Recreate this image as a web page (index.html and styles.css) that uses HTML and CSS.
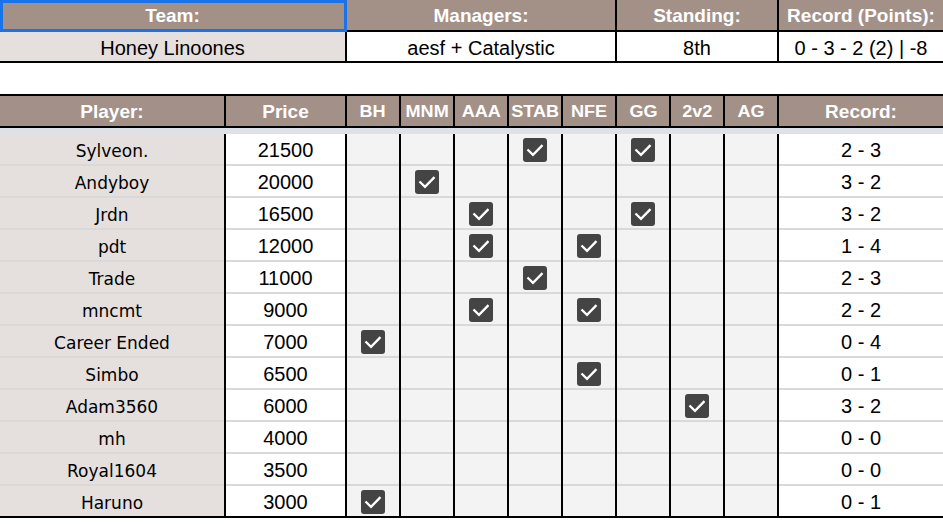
FILE: index.html
```html
<!DOCTYPE html>
<html lang="en">
<head>
<meta charset="utf-8">
<title>Honey Linoones</title>
<link rel="stylesheet" href="styles.css">
</head>
<body>
<div class="sheet">
  <div class="summary">
    <div class="row head">
      <div class="cell sel">Team:</div>
      <div class="cell">Managers:</div>
      <div class="cell">Standing:</div>
      <div class="cell clip">Record (Points):</div>
    </div>
    <div class="row data">
      <div class="cell tan">Honey Linoones</div>
      <div class="cell">aesf + Catalystic</div>
      <div class="cell">8th</div>
      <div class="cell">0 - 3 - 2 (2) | -8</div>
    </div>
  </div>

  <div class="roster">
    <div class="row head">
      <div class="cell">Player:</div>
      <div class="cell">Price</div>
      <div class="cell small"><span>BH</span></div>
      <div class="cell small"><span>MNM</span></div>
      <div class="cell small"><span>AAA</span></div>
      <div class="cell small"><span>STAB</span></div>
      <div class="cell small"><span>NFE</span></div>
      <div class="cell small"><span>GG</span></div>
      <div class="cell small"><span>2v2</span></div>
      <div class="cell small"><span>AG</span></div>
      <div class="cell">Record:</div>
    </div>
    <div class="band"></div>
    <div id="rows"></div>
  </div>
</div>
<script src="app.js"></script>
</body>
</html>
```

FILE: app.js
```js
const players = [
  ["Sylveon.", "21500", ["STAB", "GG"], "2 - 3"],
  ["Andyboy", "20000", ["MNM"], "3 - 2"],
  ["Jrdn", "16500", ["AAA", "GG"], "3 - 2"],
  ["pdt", "12000", ["AAA", "NFE"], "1 - 4"],
  ["Trade", "11000", ["STAB"], "2 - 3"],
  ["mncmt", "9000", ["AAA", "NFE"], "2 - 2"],
  ["Career Ended", "7000", ["BH"], "0 - 4"],
  ["Simbo", "6500", ["NFE"], "0 - 1"],
  ["Adam3560", "6000", ["2v2"], "3 - 2"],
  ["mh", "4000", [], "0 - 0"],
  ["Royal1604", "3500", [], "0 - 0"],
  ["Haruno", "3000", ["BH"], "0 - 1"]
];
const tiers = ["BH", "MNM", "AAA", "STAB", "NFE", "GG", "2v2", "AG"];
const check = '<span class="cb"><svg viewBox="0 0 24 24" width="24" height="24"><polyline points="5.3,12.3 10,16.8 18.7,8" fill="none" stroke="#fff" stroke-width="2.3" stroke-linecap="square"/></svg></span>';
const host = document.getElementById("rows");
players.forEach((p, i) => {
  const row = document.createElement("div");
  row.className = "row body" + (i === players.length - 1 ? " last" : "");
  let html = '<div class="cell tan name">' + p[0] + '</div>';
  html += '<div class="cell">' + p[1] + '</div>';
  tiers.forEach(t => {
    html += '<div class="cell box">' + (p[2].includes(t) ? check : '') + '</div>';
  });
  html += '<div class="cell">' + p[3] + '</div>';
  row.innerHTML = html;
  host.appendChild(row);
});
```

FILE: styles.css
```css
html, body {
  margin: 0;
  padding: 0;
  background: #fff;
  overflow: hidden;
}

.sheet {
  width: 943px;
  font-family: "Liberation Sans", Arial, sans-serif;
  color: #000;
}

.row {
  display: grid;
  column-gap: 2px;
  background: #000;
}

.cell {
  display: flex;
  align-items: center;
  justify-content: center;
  background: #fff;
  white-space: nowrap;
  overflow: hidden;
  font-size: 20px;
  box-sizing: border-box;
}

.head .cell {
  background: #a39188;
  color: #fff;
  font-weight: bold;
  font-size: 19px;
  padding-top: 2px;
}

.summary .row {
  grid-template-columns: 345px 268px 160px 164px;
}

.summary .head {
  height: 30px;
  border-bottom: 2px solid #000;
}

.summary .data {
  height: 29px;
  border-bottom: 2px solid #000;
}

.summary .data .cell {
  padding-top: 3px;
}

.sel {
  position: relative;
  overflow: visible !important;
}

.sel::after {
  content: "";
  position: absolute;
  top: 0;
  left: 0;
  right: -2px;
  bottom: -2px;
  border: 3px solid #1a73e8;
  pointer-events: none;
}

.tan {
  background: #e5e0dd;
}

.roster {
  margin-top: 31px;
  border-top: 2px solid #000;
}

.roster .row {
  grid-template-columns: 224px 119px repeat(8, 52px) 164px;
}

.roster .head {
  height: 30px;
  border-bottom: 2px solid #000;
}

.head .small span {
  display: inline-block;
  font-size: 16px;
  transform: scaleX(1.13);
}

.band {
  height: 6px;
  background: #dde1e8;
}

.body .cell {
  height: 32px;
  border-bottom: 2px solid #d9d9d9;
  padding-top: 3px;
}

.body .box {
  padding-top: 1px;
}

.body.last .cell {
  border-bottom-color: #000;
}

.name {
  font-family: "DejaVu Sans", Verdana, sans-serif;
  font-size: 17px;
}

.box {
  background: #f3f3f3;
}

.cb {
  display: block;
  width: 24px;
  height: 24px;
  border-radius: 3px;
  background: #444;
}

.cb svg {
  display: block;
}
```
